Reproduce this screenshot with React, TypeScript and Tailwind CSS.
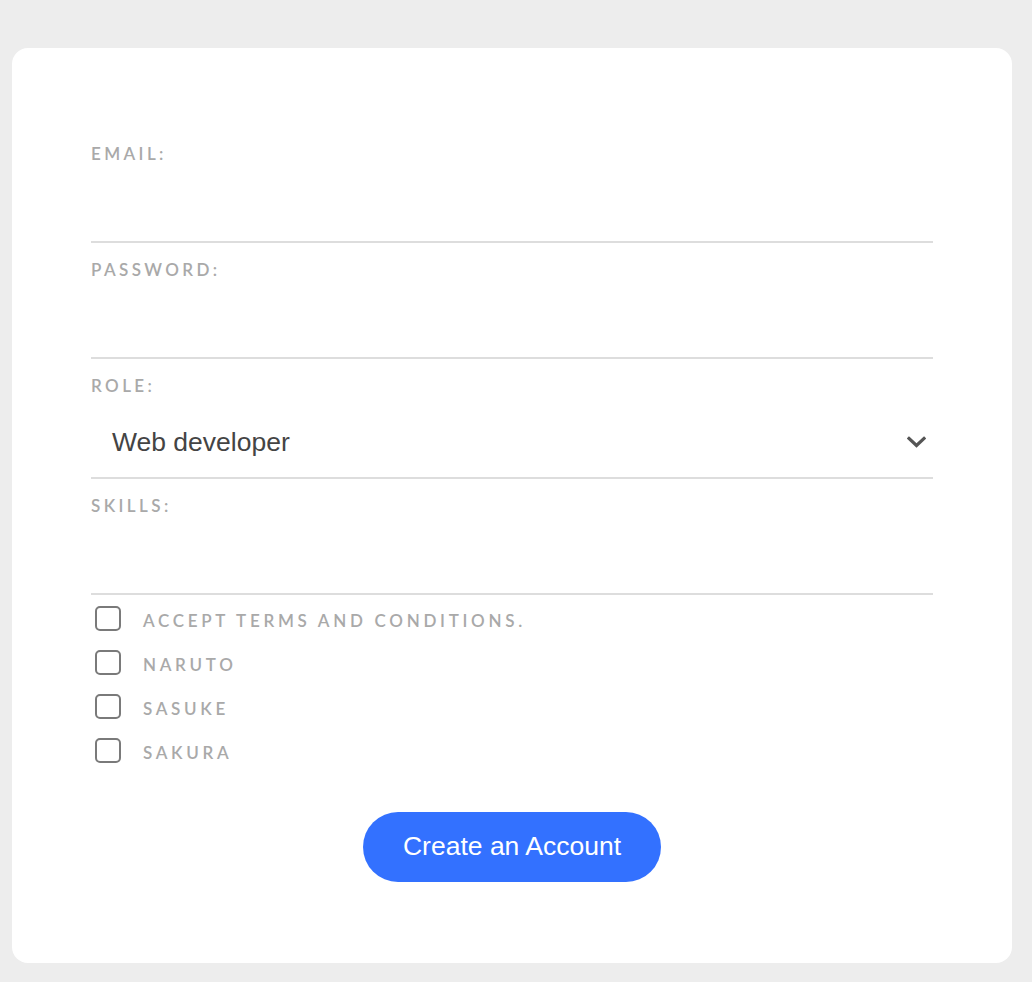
import React from 'react';

const labelCls = "block text-[17px] leading-[20px] tracking-[3.4px] uppercase text-[#a9a9a9] font-semibold";

const fields = [
  { name: 'email', label: 'Email:', type: 'email' },
  { name: 'password', label: 'Password:', type: 'password' },
];

const boxes = ['Accept terms and conditions.', 'Naruto', 'Sasuke', 'Sakura'];

const TextField = ({ label, type }: { label: string; type: string }) => (
  <div className="flex flex-col border-b-2 border-[#dddddd]">
    <label className={labelCls + " mt-[17px]"}>{label}</label>
    <input type={type} className="h-[77px] w-full outline-none bg-transparent" />
  </div>
);

export default function App() {
  return (
    <div className="min-h-[982px] bg-[#ededed] px-3 pt-12 pb-5" style={{ fontFamily: 'Lato, sans-serif' }}>
      <div className="w-[1000px] rounded-2xl bg-white px-[79px] pt-[79px] pb-[81px]">
        {fields.map((f) => (
          <TextField key={f.name} label={f.label} type={f.type} />
        ))}

        {/* role */}
        <div className="flex flex-col border-b-2 border-[#dddddd]">
          <label className={labelCls + " mt-[17px]"}>Role:</label>
          <div className="flex h-[81px] items-center justify-between pl-[21px] pr-[7px] pt-[12px]">
            <span className="text-[26.5px] text-[#444444]" style={{ fontFamily: '"Liberation Sans", Arial, sans-serif' }}>
              Web developer
            </span>
            <svg width="19" height="12" viewBox="0 0 19 12" fill="none" className="-mt-[2px]">
              <path d="M2 2.5 L9.5 9.5 L17 2.5" stroke="#555555" strokeWidth="3.2" strokeLinecap="square" />
            </svg>
          </div>
        </div>

        <TextField label="Skills:" type="text" />

        <div className="mt-[11px] flex flex-col gap-[19px]">
          {boxes.map((b) => (
            <label key={b} className="flex h-[25px] items-center gap-[22px] pl-1">
              <span className="h-[25px] w-[26px] shrink-0 rounded-[5px] border-2 border-[#7a7a7a]" />
              <span className="pt-[5px] text-[17px] leading-[20px] tracking-[3.7px] uppercase text-[#a9a9a9] font-semibold">{b}</span>
            </label>
          ))}
        </div>

        <div className="mt-[49px] flex justify-center">
          <button
            className="h-[70px] w-[298px] rounded-full bg-[#3371ff] text-[26.5px] text-white"
            style={{ fontFamily: '"Liberation Sans", Arial, sans-serif' }}
          >
            Create an Account
          </button>
        </div>
      </div>
    </div>
  );
}
